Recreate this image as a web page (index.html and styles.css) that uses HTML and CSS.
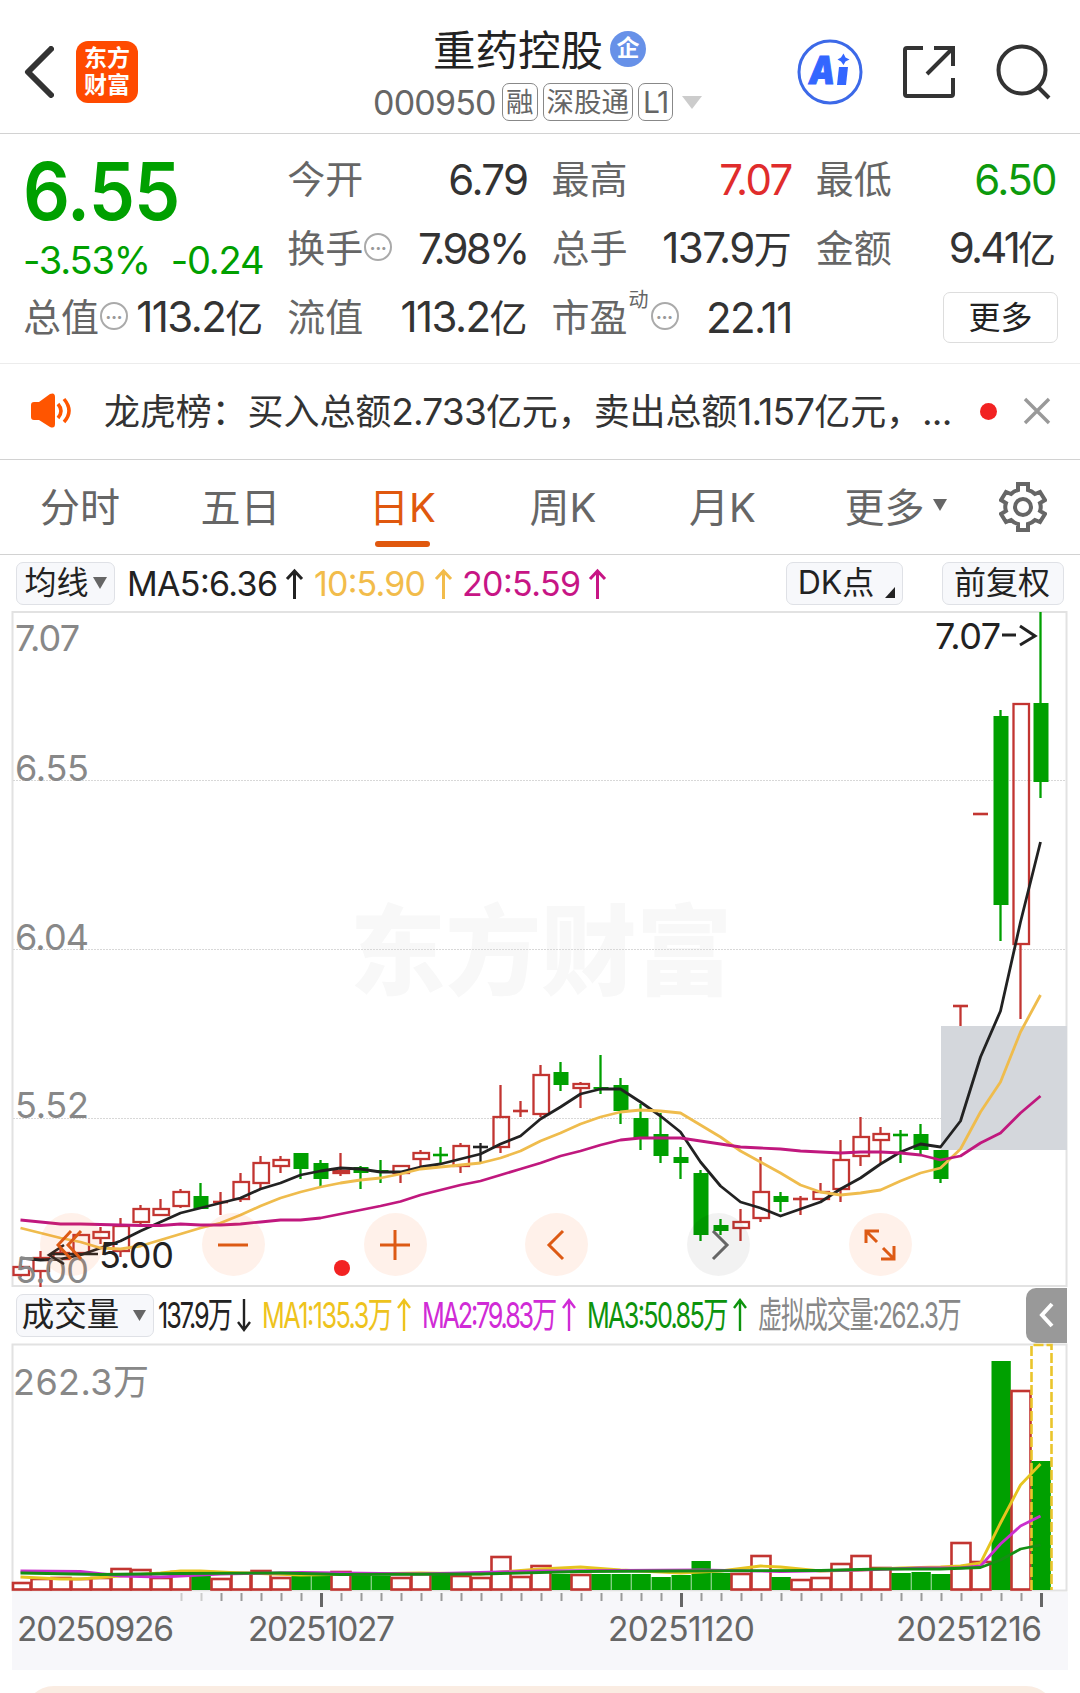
FILE: index.html
```html
<!DOCTYPE html>
<html lang="zh-CN">
<head>
    <meta charset="UTF-8">
    <meta name="viewport" content="width=device-width, initial-scale=1.0">
    <title>重药控股 000950</title>
    <link rel="stylesheet" href="styles.css">
</head>
<body>
    <header class="header">
        <svg class="back" width="30" height="52" viewBox="0 0 30 52"><path d="M27 3L4 26L27 49"/></svg>
        <div class="logo"><span>东方</span><span>财富</span></div>
        <div class="stock">
            <div class="stock-name">重药控股<span class="qi">企</span></div>
            <div class="stock-code">
                <span class="code">000950</span><span class="tag">融</span><span class="tag">深股通</span><span class="tag l1">L1</span>
                <svg width="20" height="13" viewBox="0 0 20 13"><path d="M0 0H20L10 13Z" fill="#ccc"/></svg>
            </div>
        </div>
        <div class="actions">
            <svg width="66" height="66" viewBox="0 0 66 66">
                <circle cx="33" cy="33" r="31" fill="none" stroke="#3c69e8" stroke-width="3"/>
                <text x="12" y="45" class="ai" textLength="26" lengthAdjust="spacingAndGlyphs">A</text>
                <path d="M42 28H51L49 46H40Z" fill="#3366ff"/>
                <path d="M46.500 14.500L48.500 18.500L52.500 20.500L48.500 22.500L46.500 26L44 22.500L40.500 20.500L44 18.500Z" fill="#3366ff"/>
            </svg>
            <svg width="54" height="54" viewBox="0 0 54 54" class="line">
                <path d="M21 3H5Q3 3 3 5V49Q3 51 5 51H49Q51 51 51 49V33M32 3H51V21M51 3L25 29"/>
            </svg>
            <svg width="56" height="56" viewBox="0 0 56 56" class="line">
                <circle cx="27" cy="26" r="23.5"/><path d="M42 42L54 54"/>
            </svg>
        </div>
    </header>

    <section class="quote">
        <div class="price">
            <div class="last">6.55</div>
            <div class="change"><span>-3.53%</span><span>-0.24</span></div>
        </div>
        <div class="cell"><label>今开</label><b>6.79</b></div>
        <div class="cell"><label>最高</label><b class="red">7.07</b></div>
        <div class="cell"><label>最低</label><b class="green">6.50</b></div>
        <div class="cell"><label>换手<i class="info">•••</i></label><b class="tight">7.98%</b></div>
        <div class="cell"><label>总手</label><b>137.9<u>万</u></b></div>
        <div class="cell"><label>金额</label><b class="tight">9.41<u>亿</u></b></div>
        <div class="cell"><label>总值<i class="info">•••</i></label><b>113.2<u>亿</u></b></div>
        <div class="cell"><label>流值</label><b>113.2<u>亿</u></b></div>
        <div class="cell"><label>市盈<small>动</small><i class="info">•••</i></label><b>22.11</b></div>
        <div class="cell end"><button class="more">更多</button></div>
    </section>

    <section class="notice">
        <svg width="42" height="36" viewBox="0 0 42 36">
            <path d="M4 9H9L20 1Q25 -1 25 4V31Q25 36 20 34L9 27H4Q1 27 1 24V12Q1 9 4 9Z" fill="#ff5500"/>
            <path d="M28 11Q34 18 28 25M34 6Q44 18 34 29" fill="none" stroke="#ff5500" stroke-width="3.5"/>
        </svg>
        <p>龙虎榜：买入总额<em>2.733</em>亿元，卖出总额<em>1.157</em>亿元，<em>...</em></p>
        <span class="dot"></span>
        <svg width="28" height="28" viewBox="0 0 28 28"><path d="M2 2L26 26M26 2L2 26" stroke="#999" stroke-width="3.4"/></svg>
    </section>

    <nav class="tabs">
        <a>分时</a><a>五日</a><a class="active">日K</a><a>周K</a><a>月K</a>
        <a>更多<svg width="14" height="12" viewBox="0 0 14 12"><path d="M0 0H14L7 12Z" fill="#666"/></svg></a>
        <svg class="gear" width="48" height="50" viewBox="-24 -25 48 50">
            <path d="M-5 -23H5V-17Q9 -16 12 -13L17 -15L22 -7L17 -4Q18.500 0 17 4L22 7L17 15L12 13Q9 16 5 17V23H-5V17Q-9 16 -12 13L-17 15L-22 7L-17 4Q-18.500 0 -17 -4L-22 -7L-17 -15L-12 -13Q-9 -16 -5 -17Z"/>
            <circle r="8"/>
        </svg>
    </nav>

    <div class="bar">
        <button class="pill">均线<svg width="14" height="12" viewBox="0 0 14 12"><path d="M0 0H14L7 12Z" fill="#666"/></svg></button>
        <svg class="legend" width="500" height="46" viewBox="124 560 500 46">
            <g fill="#222" stroke="#222"><text x="127" y="596" textLength="151">MA5:6.36</text><path d="M294.500 599V572M287 579L294.500 571L302 579"/></g>
            <g fill="#f2bc4b" stroke="#f2bc4b"><text x="314" y="596" textLength="112">10:5.90</text><path d="M443.500 599V572M436 579L443.500 571L451 579"/></g>
            <g fill="#c71585" stroke="#c71585"><text x="462" y="596" textLength="119">20:5.59</text><path d="M597.500 599V572M590 579L597.500 571L605 579"/></g>
        </svg>
        <button class="pill dk">DK点<svg width="10" height="11" viewBox="0 0 10 11"><path d="M10 0V11H0Z" fill="#222"/></svg></button>
        <button class="pill fq">前复权</button>
    </div>

    <div class="chart">
        <svg id="kline" width="1080" height="676" viewBox="0 611 1080 676"></svg>
        <div class="tools">
            <span><svg viewBox="-16 -16 32 32"><path d="M-1 -14L-14 0L-1 14M9 -14L-4 0L9 14"/></svg></span>
            <span><svg viewBox="-16 -16 32 32"><path d="M-15 0H15"/></svg></span>
            <span><svg viewBox="-16 -16 32 32"><path d="M-15 0H15M0 -15V15"/></svg></span>
            <span><svg viewBox="-16 -16 32 32"><path d="M6 -14L-8 0L6 14"/></svg></span>
            <span class="off"><svg viewBox="-16 -16 32 32"><path d="M-6 -14L8 0L-6 14"/></svg></span>
            <span><svg viewBox="-16 -16 32 32"><path d="M-14 -2V-14H-1M-14 -14L-3 -3M14 1V14H1M14 14L3 3"/></svg></span>
        </div>
    </div>

    <div class="bar vol">
        <button class="pill">成交量<svg width="13" height="11" viewBox="0 0 13 11"><path d="M0 0H13L6.500 11Z" fill="#666"/></svg></button>
        <svg class="legend" width="860" height="50" viewBox="158 1291 860 50">
            <g fill="#222" stroke="#222"><text transform="translate(159 1329) scale(0.7 1)" textLength="107">137.9万</text><path d="M245 1300V1330M239 1323L245 1331L251 1323"/></g>
            <g fill="#eec31d" stroke="#eec31d"><text transform="translate(263 1329) scale(0.7 1)" textLength="187">MA1:135.3万</text><path d="M405 1332V1302M399 1309L405 1301L411 1309"/></g>
            <g fill="#d02bd6" stroke="#d02bd6"><text transform="translate(423 1329) scale(0.7 1)" textLength="193">MA2:79.83万</text><path d="M570 1332V1302M564 1309L570 1301L576 1309"/></g>
            <g fill="#0d930d" stroke="#0d930d"><text transform="translate(588 1329) scale(0.7 1)" textLength="202">MA3:50.85万</text><path d="M741 1332V1302M735 1309L741 1301L747 1309"/></g>
            <g fill="#888"><text transform="translate(759 1329) scale(0.67 1)" textLength="304">虚拟成交量:262.3万</text></g>
        </svg>
        <span class="drawer"><svg width="16" height="26" viewBox="0 0 16 26"><path d="M13 2L3 13L13 24"/></svg></span>
    </div>

    <svg id="volume" width="1080" height="249" viewBox="0 1343 1080 249"></svg>
    <svg id="axis" width="1080" height="78" viewBox="0 1592 1080 78"></svg>
    <div class="next-card"></div>

    <script src="chart.js"></script>
</body>
</html>
```
FILE: styles.css
```css
* {
    box-sizing: border-box;
}

body {
    margin: 0;
    width: 1080px;
    height: 1693px;
    overflow: hidden;
    background: #fff;
    color: #333;
    font-family: Inter, "Noto Sans CJK SC", sans-serif;
}

svg {
    display: block;
    flex: none;
}

button {
    font-family: inherit;
    color: #222;
    padding: 0;
}

.red { color: #e02c2c; }
.green { color: #0d9a0d; }

/* header */
.header {
    display: flex;
    height: 134px;
    border-bottom: 1px solid #d2d2d2;
    padding: 0 27px 0 24px;
}

.back {
    margin-top: 46px;
    fill: none;
    stroke: #333;
    stroke-width: 6;
    stroke-linecap: round;
    stroke-linejoin: round;
}

.logo {
    width: 62px;
    height: 62px;
    margin: 41px 0 0 22px;
    padding-top: 4px;
    border-radius: 12px;
    background: #ff4a00;
    color: #fff;
    font-size: 23px;
    font-weight: 700;
    line-height: 27px;
    text-align: center;
}

.logo span {
    display: block;
}

.stock {
    width: 330px;
    margin-left: 235px;
    padding-top: 18px;
}

.stock-name {
    display: flex;
    align-items: center;
    padding-left: 60px;
    height: 58px;
    font-size: 42.5px;
    color: #222;
}

.qi {
    width: 36px;
    height: 36px;
    margin: 4px 0 0 7px;
    border-radius: 50%;
    background: #6791e8;
    color: #fff;
    font-size: 23px;
    font-weight: 700;
    line-height: 35px;
    text-align: center;
}

.stock-code {
    display: flex;
    align-items: center;
    margin-top: 7px;
    height: 38px;
    color: #666;
}

.code {
    width: 129px;
    font-size: 34px;
    letter-spacing: -0.8px;
}

.tag {
    height: 38px;
    margin-right: 5px;
    padding: 0 3px;
    border: 1px solid #888;
    border-radius: 7px;
    font-size: 27.5px;
    line-height: 36px;
}

.tag.l1 {
    font-size: 30px;
    padding: 0 4px;
    margin-right: 9px;
    letter-spacing: -1.5px;
}

.actions {
    display: flex;
    align-items: center;
    margin-left: 94px;
    padding-top: 10px;
}

.actions svg + svg {
    margin-left: 39px;
}

.ai {
    fill: #3366ff;
    stroke: #3366ff;
    font-size: 38px;
    font-weight: 900;
    font-style: italic;
}

.line {
    fill: none;
    stroke: #333;
    stroke-width: 4;
}

/* quote */
.quote {
    display: grid;
    grid-template-columns: repeat(4, 1fr);
    grid-template-rows: repeat(3, 69px);
    column-gap: 24px;
    height: 230px;
    padding: 11px 24px 0 23px;
    border-bottom: 1px solid #ececec;
}

.price {
    grid-row: span 2;
    color: #00a000;
}

.last {
    margin-top: 5px;
    font-size: 80px;
    font-weight: 600;
    line-height: 82px;
    letter-spacing: -1px;
    transform: scaleX(0.92);
    transform-origin: left;
}

.change {
    display: flex;
    justify-content: space-between;
    margin-top: 3px;
    font-size: 38px;
    line-height: 50px;
    letter-spacing: -1.2px;
}

.cell {
    display: flex;
    align-items: center;
    justify-content: space-between;
}

.cell.end {
    justify-content: flex-end;
}

.cell label {
    display: flex;
    align-items: center;
    font-size: 38px;
    line-height: 48px;
    padding-bottom: 2px;
    color: #666;
}

.cell b {
    font-size: 42px;
    font-weight: 400;
    line-height: 50px;
    letter-spacing: -1.6px;
    white-space: nowrap;
}

.cell b.tight {
    letter-spacing: -2.8px;
}

.cell u {
    font-size: 38px;
    text-decoration: none;
    letter-spacing: 0;
}

.info {
    width: 28px;
    height: 28px;
    margin: -2px 0 0 1px;
    border: 2px solid #aaa;
    border-radius: 50%;
    color: #999;
    font: 10px/24px Inter, sans-serif;
    text-align: center;
}

.cell small {
    align-self: flex-start;
    width: 20px;
    margin: -3px 1px 0 1px;
    font-size: 20px;
    line-height: 20px;
}

.more {
    width: 115px;
    height: 51px;
    margin-right: -2px;
    border: 1px solid #ddd;
    border-radius: 7px;
    background: #fff;
    font-size: 32px;
    line-height: 45px;
}

/* notice */
.notice {
    display: flex;
    align-items: center;
    height: 96px;
    padding: 0 29px 1px 30px;
    border-bottom: 1px solid #d2d2d2;
}

.notice p {
    width: 850px;
    margin: -4px 0 0 32px;
    font-size: 36px;
    letter-spacing: -0.1px;
    white-space: nowrap;
}

.notice em {
    font-style: normal;
    font-size: 37px;
    letter-spacing: -0.8px;
}

.dot {
    width: 17px;
    height: 17px;
    margin: 0 26px 0 27px;
    border-radius: 50%;
    background: #f22222;
    flex: none;
}

/* period tabs */
.tabs {
    display: grid;
    grid-template-columns: 160px 161px 163px 158px 161px 185px 1fr;
    align-items: center;
    height: 95px;
    border-bottom: 1px solid #d2d2d2;
    font-size: 40px;
    color: #666;
}

.tabs a {
    display: flex;
    align-items: center;
    justify-content: center;
    position: relative;
    height: 94px;
    padding-bottom: 4px;
}

.tabs a svg {
    margin-left: 8px;
}

.tabs .active {
    color: #e0580e;
}

.active::after {
    content: "";
    position: absolute;
    left: 54px;
    bottom: 7px;
    width: 55px;
    height: 6px;
    border-radius: 3px;
    background: #e0580e;
}

.gear {
    margin-left: 11px;
    fill: none;
    stroke: #666;
    stroke-width: 4;
}

/* indicator rows */
.bar {
    display: flex;
    align-items: center;
    height: 56px;
    padding: 0 15px 0 16px;
}

.pill {
    display: flex;
    align-items: center;
    justify-content: center;
    width: 99px;
    height: 43px;
    border: 1px solid #dfe1e6;
    border-radius: 7px;
    background: #f7f8fb;
    font-size: 32px;
    line-height: 36px;
}

.pill svg {
    margin-left: 4px;
}

.pill.dk {
    width: 117px;
    margin-left: 162px;
}

.dk svg {
    margin: 18px -4px 0 11px;
}

.pill.fq {
    width: 122px;
    margin-left: 39px;
    padding-right: 2px;
}

.legend {
    margin-left: 9px;
    font-size: 34px;
}

.legend text {
    stroke: none;
}

.legend path {
    fill: none;
    stroke-width: 3;
}

.vol {
    padding: 0 13px 0 16px;
}

.vol .pill {
    width: 139px;
    padding-right: 2px;
    font-size: 32.5px;
}

.vol .pill svg {
    margin-left: 14px;
}

.vol .legend {
    margin-left: 3px;
    font-size: 36px;
}

.vol .legend path {
    stroke-width: 2.4;
}

.drawer {
    display: flex;
    align-items: center;
    justify-content: center;
    width: 41px;
    height: 55px;
    margin-left: 9px;
    border-radius: 10px 0 0 10px;
    background: #999;
}

.drawer path {
    fill: none;
    stroke: #fff;
    stroke-width: 4;
}

/* charts */
.chart {
    position: relative;
    height: 676px;
}

.tools {
    position: absolute;
    left: 40px;
    bottom: 11px;
    display: flex;
    gap: 98.8px;
}

.tools span {
    width: 63px;
    height: 63px;
    padding: 15.5px;
    border-radius: 50%;
    background: rgba(255, 100, 20, 0.09);
}

.tools svg {
    width: 32px;
    height: 32px;
    fill: none;
    stroke: #dd5a14;
    stroke-width: 3;
}

.tools .off {
    background: rgba(0, 0, 0, 0.05);
}

.tools .off svg {
    stroke: #666;
}

.tick {
    font-size: 36px;
    fill: #888;
}

.note {
    font-size: 36px;
    fill: #222;
}

.date {
    font-size: 33.5px;
    fill: #666;
}

.watermark {
    font-size: 98px;
    font-weight: 900;
    fill: #f8f8f8;
}

.next-card {
    height: 60px;
    margin: 16px 24px 0 24px;
    border-radius: 30px;
    background: #faece2;
}
```
FILE: chart.js
```js
const RED = "#c23531", GREEN = "#00a000", BLACK = "#222";
const STEP = 20, X0 = 20.5;

// high, open/close top, open/close bottom, low, colour (in chart pixels)
const candles = [
    [1264,1267,1275,1277,"r"], [1251,1258,1271,1287,"r"], [1245,1253,1259,1262,"r"], [1234,1235,1253,1254,"r"],
    [1227,1232,1238,1244,"r"], [1218,1226,1251,1257,"r"], [1205,1209,1222,1225,"r"], [1199,1209,1215,1216,"r"],
    [1189,1192,1206,1208,"r"], [1183,1196,1209,1209,"g"], [1192,1202,1202,1215,"r"], [1173,1182,1199,1202,"r"],
    [1156,1163,1183,1189,"r"], [1156,1160,1166,1173,"r"], [1153,1153,1169,1179,"g"], [1160,1163,1179,1186,"g"],
    [1153,1171,1173,1176,"r"], [1166,1167,1173,1189,"g"], [1160,1170,1172,1183,"g"], [1166,1166,1173,1183,"r"],
    [1150,1153,1159,1166,"r"], [1147,1155,1155,1163,"g"], [1143,1146,1166,1173,"r"], [1143,1147,1147,1162,"b"],
    [1085,1117,1147,1153,"r"], [1101,1111,1111,1117,"r"], [1065,1075,1114,1117,"r"], [1062,1072,1085,1091,"g"],
    [1082,1084,1088,1108,"r"], [1055,1087,1089,1094,"g"], [1078,1085,1111,1124,"g"], [1104,1118,1139,1150,"g"],
    [1113,1134,1156,1163,"g"], [1147,1157,1163,1179,"g"], [1170,1173,1235,1241,"g"], [1219,1225,1231,1235,"g"],
    [1209,1222,1228,1241,"r"], [1157,1192,1218,1222,"r"], [1192,1196,1202,1212,"g"], [1196,1199,1199,1215,"r"],
    [1183,1192,1199,1200,"r"], [1140,1160,1189,1202,"r"], [1117,1137,1156,1166,"r"], [1127,1134,1140,1163,"r"],
    [1130,1135,1135,1163,"g"], [1124,1134,1150,1154,"g"], [1150,1150,1179,1183,"g"], [1006,1006,1006,1026,"r"],
    [814,814,814,814,"r"], [710,716,905,941,"g"], [703,704,944,1019,"r"], [612,703,782,798,"g"]
];

const ma5 = [1258,1260,1259,1255,1248,1241,1231,1222,1213,1208,1203,1198,1189,1183,1175,1171,1168,1169,1172,1172,1167,1164,1159,1154,1144,1136,1119,1107,1094,1089,1089,1102,1116,1132,1162,1186,1202,1208,1216,1209,1202,1189,1178,1164,1152,1144,1147,1121,1057,1011,922,842];
const ma10 = [1228,1233,1238,1242,1248,1249,1246,1240,1234,1228,1223,1215,1206,1198,1192,1187,1183,1180,1178,1174,1169,1167,1165,1163,1158,1151,1141,1133,1124,1117,1112,1110,1111,1113,1125,1137,1151,1162,1173,1185,1192,1195,1193,1190,1181,1173,1168,1149,1112,1082,1032,995];
const ma20 = [1220,1222,1224,1224,1224.5,1225,1225.5,1225.5,1224,1225,1225,1224,1222,1220,1220,1218,1214,1210,1206,1201.5,1195,1190,1185,1181,1175,1169,1163,1156,1151,1145,1140,1138,1138,1138,1141,1144,1147,1148,1149,1151,1152,1153,1152,1152,1153,1155,1160,1156,1143,1133,1113,1096];

const volumes = [1582,1578,1577,1578,1577,1568,1569,1577,1571,1575,1578,1572,1570,1577,1575,1575,1571,1575,1576,1577,1573,1575,1575,1577,1556,1576,1565,1574,1574,1574,1574,1574,1577,1575,1561,1573,1573,1555,1577,1579,1577,1563,1555,1567,1573,1572,1574,1542,1561,1361,1390,1461];

// volume averages: index, y
const vma1 = [[0,1577],[2,1579],[3,1579],[5,1576],[7,1573],[8,1571],[9,1571],[11,1573],[14,1575],[17,1574],[20,1573],[23,1574],[24,1572],[26,1569],[28,1567],[30,1570],[33,1573],[35,1571],[37,1566],[38,1567],[40,1571],[42,1570],[44,1568],[46,1567],[47,1566],[48,1563],[49,1523],[50,1485],[51,1464]];
const vma2 = [[0,1571],[3,1571.5],[5,1576],[7,1577],[10,1574],[14,1572.5],[20,1574],[26,1571],[34,1570],[38,1571.5],[42,1570],[45,1568],[47,1568],[48,1566],[49,1544],[50,1526],[51,1516]];
const vma3 = [[0,1573],[4,1574.5],[8,1573.5],[13,1573],[16,1574.5],[23,1574],[28,1571.5],[33,1571],[40,1570.5],[43,1569],[46,1569],[48,1567.5],[49,1560],[50,1549],[51,1545]];

function rect(x, y, w, h, fill, stroke, sw) {
    return `<rect x="${x}" y="${y}" width="${w}" height="${h}" fill="${fill}"${stroke ? ` stroke="${stroke}" stroke-width="${sw}"` : ""}/>`;
}

function line(x1, y1, x2, y2, color, w, extra) {
    return `<path d="M${x1} ${y1}L${x2} ${y2}" fill="none" stroke="${color}" stroke-width="${w}" ${extra || ""}/>`;
}

function curve(points, color) {
    return `<polyline points="${points.map(p => (X0 + p[0] * STEP) + "," + p[1]).join(" ")}" fill="none" stroke="${color}" stroke-width="2.8" stroke-linejoin="round"/>`;
}

function text(x, y, str, cls, len, extra) {
    return `<text x="${x}" y="${y}" class="${cls}" textLength="${len}" ${extra || ""}>${str}</text>`;
}

function drawKline() {
    let s = rect(12.5, 612, 1054, 674, "none", "#e2e2e2", 2);
    s += text(350, 987, "东方财富", "watermark", 382, 'lengthAdjust="spacingAndGlyphs"');
    [780.5, 949.5, 1118.5].forEach(y => s += line(13, y, 1066, y, "#d8d8d8", 1, 'stroke-dasharray="2 1"'));
    s += rect(941, 1026, 126, 124, "#d4d7dc");

    candles.forEach((c, i) => {
        const x = X0 + i * STEP;
        const color = { r: RED, g: GREEN, b: BLACK }[c[4]];
        if (c[1] === c[2]) {
            s += line(x - 7.5, c[1], x + 7.5, c[1], color, 2.6);
            s += line(x, c[0], x, c[3], color, 2.3);
        } else if (c[4] === "g") {
            s += line(x, c[0], x, c[3], color, 2.3);
            s += rect(x - 7, c[1], 15, c[2] - c[1], color);
        } else {
            s += line(x, c[0], x, c[1], color, 2.3) + line(x, c[2], x, c[3], color, 2.3);
            s += rect(x - 7, c[1], 15.5, c[2] - c[1], "none", color, 2.3);
        }
    });

    s += curve(ma5.map((y, i) => [i, y]), BLACK);
    s += curve(ma10.map((y, i) => [i, y]), "#efbc4d");
    s += curve(ma20.map((y, i) => [i, y]), "#c0187e");

    [["7.07", 651], ["6.55", 781], ["6.04", 950], ["5.52", 1118], ["5.00", 1283]].forEach(t => {
        s += text(15, t[1], t[0], "tick", t[0] === "7.07" ? 65 : 74);
    });
    s += text(99, 1268, "5.00", "note", 75);
    s += '<path d="M98 1254H50M64 1245L49 1255L64 1264" fill="none" stroke="#222" stroke-width="2.6"/>';
    s += text(935, 649, "7.07", "note", 66);
    s += '<path d="M1002 635H1016M1020 626L1035 636L1020 645" fill="none" stroke="#222" stroke-width="3"/>';
    s += '<circle cx="342" cy="1268" r="8" fill="#f22222"/>';
    document.getElementById("kline").innerHTML = s;
}

function drawVolume() {
    let s = rect(12.5, 1344.5, 1054, 246, "none", "#e2e2e2", 2);
    volumes.forEach((y, i) => {
        const x = X0 + i * STEP;
        if (candles[i][4] === "g") {
            s += rect(x - 9, y, 19.3, 1590 - y, GREEN);
        } else {
            const left = i === 0 ? 13 : x - 9;
            s += rect(left, y + 1, x + 10 - left, 1588.5 - y, "none", RED, 2.6);
        }
    });
    s += '<path d="M1031.500 1590V1345H1051.500V1590" fill="none" stroke="#eac52c" stroke-width="2.6" stroke-dasharray="10 3"/>';
    s += curve(vma1, "#e6c41f") + curve(vma2, "#ca2fce") + curve(vma3, "#148f14");
    s += text(13, 1395, "262.3万", "tick", 136);
    document.getElementById("volume").innerHTML = s;
}

function drawAxis() {
    let s = rect(12, 1592, 1056, 78, "#f7f7fa");
    for (let i = 8; i < 52; i++) {
        const x = X0 + 1 + i * STEP;
        const major = i === 15 || i === 33 || i === 51;
        s += line(x, 1593, x, major ? 1607 : 1601, major ? "#666" : i < 10 ? "#ccc" : "#999", major ? 3 : 2);
    }
    s += text(17, 1641, "20250926", "date", 157);
    s += text(248, 1641, "20251027", "date", 147);
    s += text(608, 1641, "20251120", "date", 147);
    s += text(896, 1641, "20251216", "date", 146);
    document.getElementById("axis").innerHTML = s;
}

drawKline();
drawVolume();
drawAxis();
```
